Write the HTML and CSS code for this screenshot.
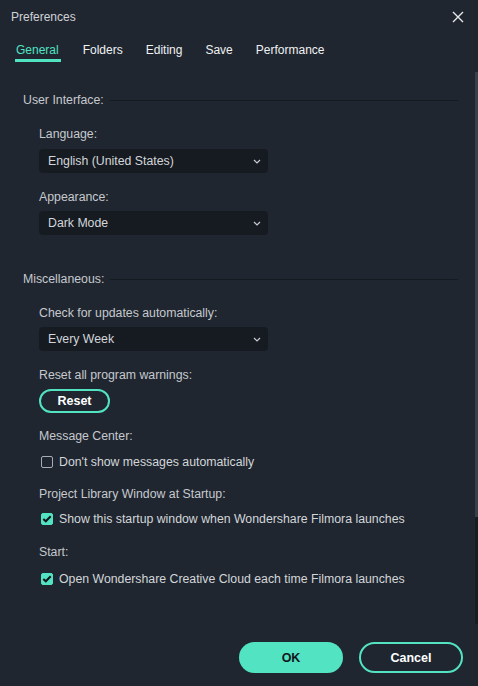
FILE: index.html
```html
<!DOCTYPE html>
<html>
<head>
<meta charset="utf-8">
<link rel="stylesheet" href="styles.css">
</head>
<body>
<div class="dialog">
  <div class="titlebar">
    <span class="title">Preferences</span>
    <svg class="close" width="12" height="12" viewBox="0 0 12 12"><path d="M1 1L11 11M11 1L1 11" stroke="#e6e8ea" stroke-width="1.4"/></svg>
  </div>
  <div class="tabs">
    <div class="tab active">General</div>
    <div class="tab">Folders</div>
    <div class="tab">Editing</div>
    <div class="tab">Save</div>
    <div class="tab">Performance</div>
  </div>
  <div class="content">
    <div class="section-head s1"><span>User Interface:</span><div class="rule"></div></div>
    <div class="group">
      <div class="label l-lang">Language:</div>
      <div class="select s-gap"><span>English (United States)</span><svg class="chev" width="8" height="5" viewBox="0 0 8 5"><path d="M1 1L4 4L7 1" stroke="#c9ccd0" stroke-width="1.2" fill="none"/></svg></div>
      <div class="label l-app">Appearance:</div>
      <div class="select s-gap2"><span>Dark Mode</span><svg class="chev" width="8" height="5" viewBox="0 0 8 5"><path d="M1 1L4 4L7 1" stroke="#c9ccd0" stroke-width="1.2" fill="none"/></svg></div>
    </div>
    <div class="section-head s2"><span>Miscellaneous:</span><div class="rule"></div></div>
    <div class="group">
      <div class="label l-upd">Check for updates automatically:</div>
      <div class="select s-gap2"><span>Every Week</span><svg class="chev" width="8" height="5" viewBox="0 0 8 5"><path d="M1 1L4 4L7 1" stroke="#c9ccd0" stroke-width="1.2" fill="none"/></svg></div>
      <div class="label l-reset">Reset all program warnings:</div>
      <button class="btn-reset">Reset</button>
      <div class="label l-msg">Message Center:</div>
      <label class="check c1"><span class="box"></span><span>Don't show messages automatically</span></label>
      <div class="label l-proj">Project Library Window at Startup:</div>
      <label class="check c2"><span class="box on"><svg width="10" height="8" viewBox="0 0 10 8"><path d="M1.3 4L3.8 6.3L8.7 1.3" stroke="#11161c" stroke-width="2" fill="none"/></svg></span><span>Show this startup window when Wondershare Filmora launches</span></label>
      <div class="label l-start">Start:</div>
      <label class="check c3"><span class="box on"><svg width="10" height="8" viewBox="0 0 10 8"><path d="M1.3 4L3.8 6.3L8.7 1.3" stroke="#11161c" stroke-width="2" fill="none"/></svg></span><span>Open Wondershare Creative Cloud each time Filmora launches</span></label>
    </div>
  </div>
  <div class="footer">
    <button class="btn btn-ok">OK</button>
    <button class="btn btn-cancel">Cancel</button>
  </div>
  <div class="scrollbar"><div class="thumb"></div></div>
</div>
</body>
</html>
```
FILE: styles.css
```css
* { box-sizing: border-box; }
html, body { margin: 0; padding: 0; }
body {
  background: #1f2630;
  font-family: "Liberation Sans", Arial, sans-serif;
  font-size: 12.3px;
  color: #c6c9cd;
  width: 478px;
  height: 686px;
  overflow: hidden;
}
.dialog {
  position: relative;
  width: 478px;
  height: 686px;
  display: flex;
  flex-direction: column;
}
.titlebar {
  height: 33px;
  display: flex;
  align-items: center;
  justify-content: space-between;
  padding: 0 14px 0 11px;
  font-size: 12px;
  color: #cfd2d6;
}
.title { line-height: 16px; }
.close { display: block; }
.tabs {
  display: flex;
  gap: 21px;
  padding: 9px 0 0 15px;
  height: 29px;
}
.tab {
  font-size: 12px;
  line-height: 16px;
  color: #f0f1f2;
  padding: 0 1px;
  height: 20px;
  border-bottom: 3px solid transparent;
}
.tab.active {
  color: #52e3c2;
  border-bottom-color: #52e3c2;
  padding: 0 2px 0 1px;
}
.content {
  padding-left: 23px;
  flex: 1;
}
.section-head {
  display: flex;
  align-items: center;
  gap: 6px;
  line-height: 16px;
  margin-right: 20px;
}
.s1 { margin-top: 30px; }
.s2 { margin-top: 36px; }
.rule {
  flex: 1;
  height: 1px;
  background: #151a20;
}
.group {
  padding-left: 16px;
  display: flex;
  flex-direction: column;
  align-items: flex-start;
}
.label { line-height: 16px; }
.l-lang { margin-top: 18px; }
.l-app { margin-top: 16px; }
.l-upd { margin-top: 18px; }
.l-reset { margin-top: 16px; }
.l-msg { margin-top: 15px; }
.l-proj { margin-top: 16px; }
.l-start { margin-top: 17px; }
.select {
  width: 229px;
  height: 24px;
  background: #161b22;
  border-radius: 4px;
  display: flex;
  align-items: center;
  justify-content: space-between;
  padding: 0 7px 0 9px;
  color: #d3d6d9;
}
.s-gap { margin-top: 7px; }
.s-gap2 { margin-top: 6px; }
.chev { display: block; }
.btn-reset {
  margin-top: 6px;
  width: 71px;
  height: 24px;
  border: 2px solid #52e3c2;
  border-radius: 12px;
  background: transparent;
  color: #ffffff;
  font-family: "Liberation Sans", Arial, sans-serif;
  font-weight: bold;
  font-size: 12.5px;
  padding: 0;
}
.check {
  display: flex;
  align-items: center;
  gap: 6px;
  line-height: 16px;
  padding-left: 2px;
  color: #d3d6d9;
}
.c1 { margin-top: 10px; }
.c2 { margin-top: 9px; }
.c3 { margin-top: 11px; }
.box {
  width: 12px;
  height: 12px;
  border: 1.5px solid #a9adb3;
  border-radius: 2px;
  display: flex;
  align-items: center;
  justify-content: center;
}
.box.on {
  background: #52e3c2;
  border-color: #52e3c2;
}
.box svg { display: block; }
.footer {
  display: flex;
  justify-content: flex-end;
  gap: 16px;
  padding: 0 15px 13px 0;
}
.btn {
  width: 104px;
  height: 31px;
  border-radius: 16px;
  font-family: "Liberation Sans", Arial, sans-serif;
  font-weight: bold;
  font-size: 12.5px;
  padding: 0;
}
.btn-ok {
  background: #52e3c2;
  border: none;
  color: #11161c;
}
.btn-cancel {
  background: transparent;
  border: 2px solid #52e3c2;
  color: #ffffff;
}
.scrollbar {
  position: absolute;
  right: 0;
  top: 72px;
  width: 3px;
  height: 552px;
  background: #181d24;
}
.thumb {
  height: 445px;
  background: #394049;
}
```
